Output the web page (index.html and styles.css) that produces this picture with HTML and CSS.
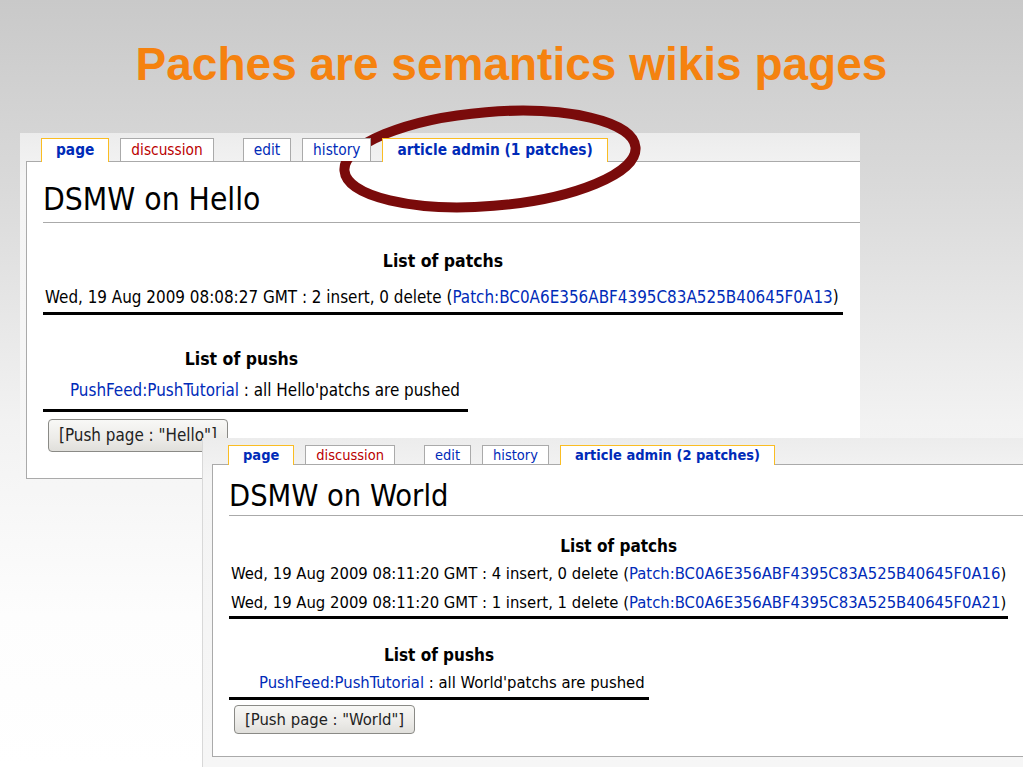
FILE: index.html
```html
<!DOCTYPE html>
<html lang="en">
  <head>
    <meta charset="UTF-8" />
    <title>Paches are semantics wikis pages</title>
    <link rel="stylesheet" href="styles.css">
  </head>
  <body>
    <!-- Slide title -->
    <h1 class="slide-title">Paches are semantics wikis pages</h1>

    <!-- First wiki screenshot -->
    <div class="shot shot-hello">
      <ul class="tabs">
        <li class="tab selected">page</li>
        <li class="tab new">discussion</li>
        <li class="tab tab-edit">edit</li>
        <li class="tab">history</li>
        <li class="tab selected">article admin (1 patches)</li>
      </ul>
      <div class="content">
        <h2 class="page-title">DSMW on Hello</h2>
        <table class="list patches">
          <caption>List of patchs</caption>
          <tr>
            <td>Wed, 19 Aug 2009 08:08:27 GMT : 2 insert, 0 delete (<a href="#">Patch:BC0A6E356ABF4395C83A525B40645F0A13</a>)</td>
          </tr>
        </table>
        <table class="list pushes">
          <caption>List of pushs</caption>
          <tr>
            <td><a href="#">PushFeed:PushTutorial</a> : all Hello'patchs are pushed</td>
          </tr>
        </table>
        <button class="push-btn">[Push page : "Hello"]</button>
      </div>
    </div>

    <!-- Second wiki screenshot, lying over the first one -->
    <div class="shot shot-world">
      <ul class="tabs">
        <li class="tab selected">page</li>
        <li class="tab new">discussion</li>
        <li class="tab tab-edit">edit</li>
        <li class="tab">history</li>
        <li class="tab selected">article admin (2 patches)</li>
      </ul>
      <div class="content">
        <h2 class="page-title">DSMW on World</h2>
        <table class="list patches">
          <caption>List of patchs</caption>
          <tr>
            <td>Wed, 19 Aug 2009 08:11:20 GMT : 4 insert, 0 delete (<a href="#">Patch:BC0A6E356ABF4395C83A525B40645F0A16</a>)</td>
          </tr>
          <tr>
            <td>Wed, 19 Aug 2009 08:11:20 GMT : 1 insert, 1 delete (<a href="#">Patch:BC0A6E356ABF4395C83A525B40645F0A21</a>)</td>
          </tr>
        </table>
        <table class="list pushes">
          <caption>List of pushs</caption>
          <tr>
            <td><a href="#">PushFeed:PushTutorial</a> : all World'patchs are pushed</td>
          </tr>
        </table>
        <button class="push-btn">[Push page : "World"]</button>
      </div>
    </div>

    <!-- Hand-drawn highlight around the admin tab -->
    <svg class="highlight" width="340" height="140" viewBox="0 0 340 140">
      <ellipse cx="160" cy="64" rx="146" ry="47" transform="rotate(-4.6 160 64)" />
    </svg>
  </body>
</html>
```

FILE: styles.css
```css
/* Slide background */
html,
body {
  margin: 0;
  padding: 0;
  height: 100%;
  overflow: hidden;
}

body {
  position: relative;
  background: linear-gradient(to bottom, #c9c9c9 0%, #dadada 25%, #f2f2f2 55%, #fdfdfd 80%, #ffffff 100%);
  font-family: "DejaVu Sans Condensed", "DejaVu Sans", sans-serif;
  color: #000;
}

/* Slide title */
.slide-title {
  margin: 0;
  padding-top: 38px;
  text-align: center;
  font: bold 46px/1.15 "Liberation Sans", Arial, sans-serif;
  color: #f5820f;
}

/* Screenshots placed on the slide */
.shot {
  position: absolute;
  background: linear-gradient(to bottom, #ececec 0%, #f4f4f4 12%, #f6f6f6 100%);
  overflow: hidden;
}

.shot-hello {
  left: 20px;
  top: 133px;
  width: 840px;
  height: 360px;
}

.shot-world {
  left: 202px;
  top: 438px;
  right: 0;
  bottom: 0;
  border-left: 1px solid #d8d8d8;
}

/* Wiki tabs */
.tabs {
  display: flex;
  align-items: flex-end;
  list-style: none;
  margin: 0;
  padding: 0 0 0 21px;
  height: 28px;
  box-sizing: border-box;
  position: relative;
  z-index: 1;
}

.tab {
  border: 1px solid #aaa;
  border-bottom: none;
  background: #fff;
  margin-right: 11px;
  padding: 0 10px;
  font-size: 15.3px;
  line-height: 22px;
  color: #002bb8;
}

.tab.selected {
  border-color: #fabd23;
  font-weight: bold;
  padding: 0 14px 1px;
  margin-bottom: -1px;
}

.tab.new {
  color: #ba0000;
}

.tab.tab-edit {
  margin-left: 18px;
}

/* Article area */
.content {
  margin-left: 6px;
  background: #fff;
  border: 1px solid #aaa;
  border-right: none;
  padding: 0 0 0 16px;
  height: 318px;
  box-sizing: border-box;
}

.page-title {
  margin: 0;
  padding: 19px 0 3px;
  font-size: 31.5px;
  font-weight: normal;
  line-height: 1.2;
  border-bottom: 1px solid #aaa;
}

a {
  color: #002bb8;
  text-decoration: none;
}

/* Patch and push lists */
.list {
  border-collapse: collapse;
  border-bottom: 3px solid #000;
  font-size: 16.9px;
}

.list caption {
  font-size: 17.5px;
  font-weight: bold;
  line-height: 22px;
}

.list td {
  padding: 0 2px;
  line-height: 22px;
  white-space: nowrap;
}

.patches {
  width: 800px;
  margin-top: 27px;
}

.patches caption {
  padding-bottom: 8px;
}

.patches td {
  padding-top: 6px;
  padding-bottom: 4px;
}

.pushes {
  width: 425px;
  margin-top: 33px;
}

.pushes caption {
  padding: 0 28px 4px 0;
}

.pushes td {
  padding: 5px 2px 8px 27px;
}

.push-btn {
  display: block;
  margin: 7px 0 0 5px;
  height: 33px;
  padding: 0 10px;
  font: 16.9px "DejaVu Sans Condensed", "DejaVu Sans", sans-serif;
  color: #222;
  background: linear-gradient(to bottom, #f8f8f6 0%, #ecebe8 60%, #e0dfdb 100%);
  border: 1px solid #8a8a86;
  border-radius: 4px;
}

/* Second screenshot is slightly tighter */
.shot-world .tabs {
  padding-left: 25px;
  height: 26px;
}

.shot-world .tab {
  font-size: 14.5px;
  line-height: 18px;
}

.shot-world .content {
  margin-left: 9px;
  padding-left: 16px;
  height: 293px;
}

.shot-world .page-title {
  padding-top: 13px;
  padding-bottom: 0;
  font-size: 30.5px;
}

.shot-world .list {
  font-size: 16.5px;
}

.shot-world .list caption {
  font-size: 17px;
  line-height: 21px;
  padding: 0 0 2px;
}

.shot-world .list td {
  line-height: 21px;
  padding: 4px 2px;
}

.shot-world .patches {
  width: 778px;
  margin-top: 20px;
}

.shot-world .patches tr:last-child td {
  padding-bottom: 3px;
}

.shot-world .pushes {
  width: 420px;
  margin-top: 26px;
}

.shot-world .pushes td {
  padding-left: 30px;
}

.shot-world .push-btn {
  height: 29px;
  margin-top: 5px;
  font-size: 16.5px;
}

/* Red ellipse drawn over the screenshot */
.highlight {
  position: absolute;
  left: 330px;
  top: 95px;
}

.highlight ellipse {
  fill: none;
  stroke: #7a0b0b;
  stroke-width: 10;
}
```
